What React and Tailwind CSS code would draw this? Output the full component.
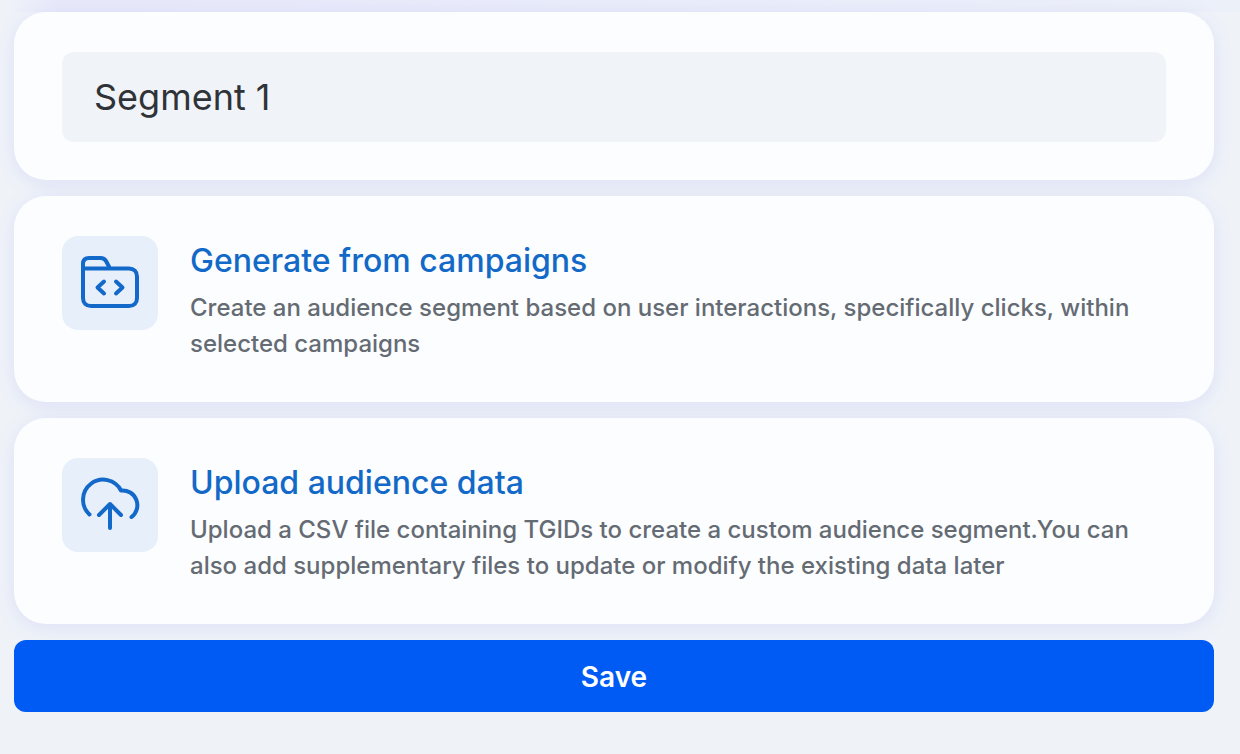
function FolderCodeIcon() {
  return (
    <svg viewBox="0 0 96 94" className="h-full w-full" fill="none" stroke="currentColor" strokeWidth="4" strokeLinecap="round" strokeLinejoin="round" aria-hidden="true">
      <path d="M21 32.5H67c5 0 8 3 8 8V62c0 5-3 8-8 8H29c-5 0-8-3-8-8V28c0-4 2-6 6-6H38.500c2.500 0 4.300.9 5.500 3L48 32.500" />
      <path d="M42 45.500L35.500 51.500L42 57.500M54 45.500L60.500 51.500L54 57.500" />
    </svg>
  );
}

function CloudUploadIcon() {
  return (
    <svg viewBox="0 0 96 94" className="h-full w-full" fill="none" stroke="currentColor" strokeWidth="4" strokeLinecap="round" strokeLinejoin="round" aria-hidden="true">
      <path d="M27.500 56.500A20.100 20.100 0 1 1 59 32.500A14.800 14.800 0 0 1 69.500 59" />
      <path d="M48 70V46M37 57L48 46L59 57" />
    </svg>
  );
}

const cardClass =
  "rounded-[32px] bg-[#fbfdff] shadow-[0_4px_20px_rgba(100,100,240,0.12)]";

function OptionCard({ icon, title, description }) {
  return (
    <button type="button" className={`${cardClass} flex w-full items-start gap-8 px-12 py-10 text-left`}>
      <span className="h-[94px] w-24 shrink-0 rounded-2xl bg-[#e7effb] text-[#1269c9]">{icon}</span>
      <span className="min-w-0 flex-1">
        <span className="mb-1 block text-[32px] leading-[50px] font-medium text-[#1269c7]">{title}</span>
        <span className="block text-2xl leading-9 font-medium text-[#656b73]">{description}</span>
      </span>
    </button>
  );
}

export default function App() {
  return (
    <main className="min-h-screen bg-[#eff3f8] font-['Inter',sans-serif]">
      <div className="h-3 bg-linear-to-r from-[#eff3f8] via-[#e7e9fa] via-5% to-[#ecf0f9]" />
      <form className="flex flex-col gap-4 pr-[26px] pb-10 pl-3.5" onSubmit={(e) => e.preventDefault()}>
        <div className={`${cardClass} px-12 pt-10 pb-[38px]`}>
          <input
            type="text"
            aria-label="Segment name"
            defaultValue="Segment 1"
            className="block h-[90px] w-full rounded-xl bg-[#f0f3f8] px-8 text-4xl text-[#2f3338] outline-none"
          />
        </div>
        <OptionCard
          icon={<FolderCodeIcon />}
          title="Generate from campaigns"
          description="Create an audience segment based on user interactions, specifically clicks, within selected campaigns"
        />
        <OptionCard
          icon={<CloudUploadIcon />}
          title="Upload audience data"
          description="Upload a CSV file containing TGIDs to create a custom audience segment.You can also add supplementary files to update or modify the existing data later"
        />
        <button type="submit" className="h-[72px] w-full rounded-xl bg-[#005af4] pt-0.5 text-[28px] font-semibold text-white">
          Save
        </button>
      </form>
    </main>
  );
}
